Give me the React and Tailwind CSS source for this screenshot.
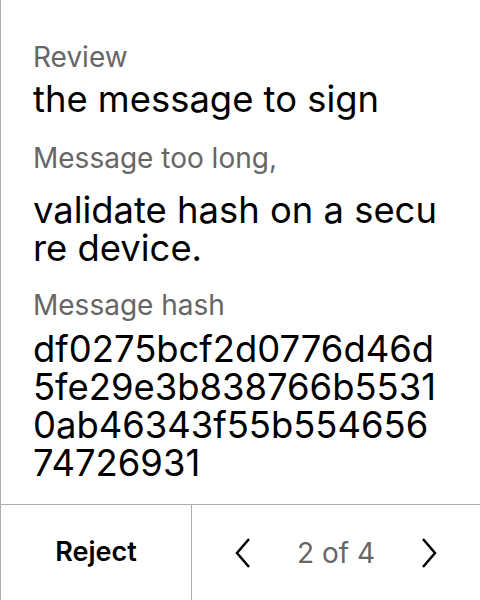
export default function App() {
  return (
    <div
      className="w-[480px] h-[600px] bg-white border-l border-[#adadad] flex flex-col"
      style={{ fontFamily: 'Inter, "Liberation Sans", sans-serif' }}
    >
      <div className="flex-1 pl-8 pr-4 pt-[39px]">
        <div className="text-[28px] leading-[36px] text-[#666666]">Review</div>
        <div className="mt-[5px] text-[36.4px] leading-[38px] text-black">the message to sign</div>

        <div className="mt-[22px] text-[28px] leading-[36px] text-[#666666]">Message too long,</div>
        <div className="mt-[15px] text-[36.4px] leading-[38px] text-black">
          validate hash on a secu
          <br />
          re device.
        </div>

        <div className="mt-[20px] text-[28px] leading-[36px] text-[#666666]">Message hash</div>
        <div className="mt-[7px] text-[36.4px] leading-[38px] text-black">
          df0275bcf2d0776d46d
          <br />
          5fe29e3b838766b5531
          <br />
          0ab46343f55b554656
          <br />
          74726931
        </div>
      </div>
      <div className="h-[96px] border-t border-[#adadad] flex">
        <button className="w-[191px] border-r border-[#adadad] flex items-center justify-center text-[27px] font-semibold text-black">
          Reject
        </button>
        <div className="flex-1 flex items-center justify-between pl-[42px] pr-[42px]">
          <svg width="18" height="32" viewBox="0 0 18 32" fill="none" stroke="black" strokeWidth="2.5">
            <path d="M15 2 L3 16 L15 30" />
          </svg>
          <span className="text-[28px] text-[#666666]">2 of 4</span>
          <svg width="18" height="32" viewBox="0 0 18 32" fill="none" stroke="black" strokeWidth="2.5">
            <path d="M3 2 L15 16 L3 30" />
          </svg>
        </div>
      </div>
    </div>
  )
}
